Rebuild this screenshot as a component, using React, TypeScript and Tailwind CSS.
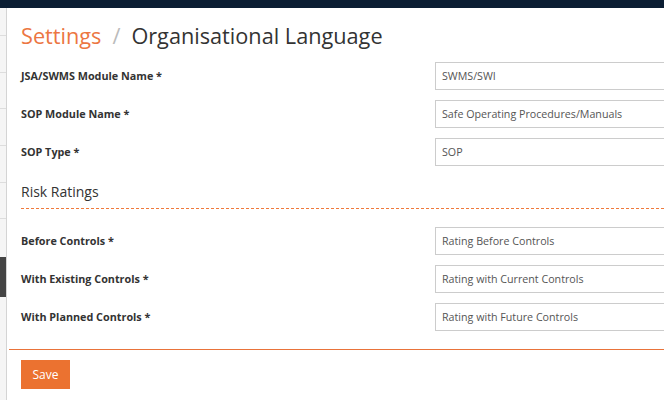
const sidebarLines = [35, 72, 108, 145, 182, 218];

function Field({ label, value }: { label: string; value: string }) {
  return (
    <div className="flex items-center h-[28px] mb-[10px]">
      <label className="w-[414px] shrink-0 text-[10.8px] font-bold text-[#333]">{label}</label>
      <div className="w-[300px] shrink-0 h-[28px] border border-[#ccc] bg-white flex items-center px-[6px] text-[10.7px] text-[#555]">
        {value}
      </div>
    </div>
  );
}

export default function App() {
  return (
    <div className="w-[664px] h-[400px] overflow-hidden bg-white flex flex-col" style={{ fontFamily: '"Open Sans", sans-serif' }}>
      <div className="h-[8px] bg-[#0b1e33] shrink-0" />
      <div className="flex flex-1 min-h-0">
        {/* left rail */}
        <div className="relative w-[7px] shrink-0 bg-[#f5f5f5] border-r border-[#d4d4d4]">
          {sidebarLines.map((y) => (
            <div key={y} className="absolute left-0 right-0 h-px bg-[#ddd]" style={{ top: y - 8 }} />
          ))}
          <div className="absolute left-0 right-0 bg-[#444]" style={{ top: 257 - 8, height: 40 }} />
        </div>

        <div className="flex-1 min-w-0 overflow-hidden">
          <div className="pl-[14px] pt-[13px]">
            <h1 className="text-[21.7px] leading-[30px] whitespace-nowrap">
              <span className="text-[#ec7642]">Settings</span>
              <span className="text-[#bbb] mx-[11px]">/</span>
              <span className="text-[#333]">Organisational Language</span>
            </h1>

            <div className="mt-[11px]">
              <Field label="JSA/SWMS Module Name *" value="SWMS/SWI" />
              <Field label="SOP Module Name *" value="Safe Operating Procedures/Manuals" />
              <Field label="SOP Type *" value="SOP" />
            </div>

            <div className="text-[14px] text-[#333] mt-[16px] leading-[20px]">Risk Ratings</div>
            <div className="h-0 border-0 border-t border-dashed border-t-[#f07a3c] mt-[6px] mb-[18px]" />

            <Field label="Before Controls *" value="Rating Before Controls" />
            <Field label="With Existing Controls *" value="Rating with Current Controls" />
            <Field label="With Planned Controls *" value="Rating with Future Controls" />
          </div>

          <div className="mt-[18px] ml-[2px] h-0 border-0 border-t border-solid border-t-[#e9733a]" />
          <div className="pl-[14px] pt-[10px]">
            <button className="h-[29px] w-[49px] bg-[#eb7230] text-white text-[12px]">Save</button>
          </div>
        </div>
      </div>
    </div>
  );
}
